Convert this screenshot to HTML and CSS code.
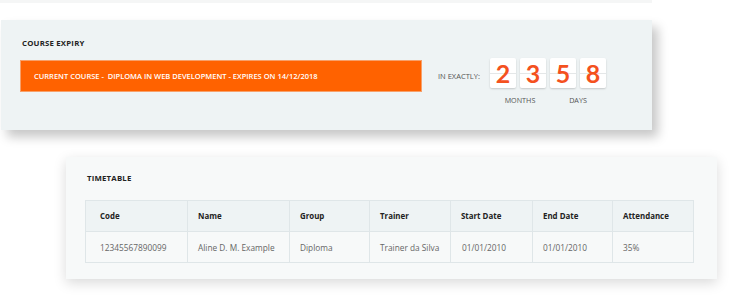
FILE: index.html
```html
<!DOCTYPE html>
<html lang="en">
<head>
  <meta charset="UTF-8" />
  <title>Student Dashboard</title>
  <link rel="stylesheet" href="styles.css">
</head>
<body>
  <div class="top-strip"></div>

  <section class="expiry">
    <h2 class="panel-title">Course Expiry</h2>
    <div class="expiry-row">
      <div class="course-bar">Current Course - &nbsp;Diploma in Web Development - Expires on 14/12/2018</div>
      <div class="countdown">
        <span class="countdown-label">In exactly:</span>
        <div class="counter">
          <div class="digits">
            <span class="digit">2</span>
            <span class="digit">3</span>
            <span class="digit">5</span>
            <span class="digit">8</span>
          </div>
          <div class="units">
            <span>Months</span>
            <span>Days</span>
          </div>
        </div>
      </div>
    </div>
  </section>

  <section class="timetable">
    <h2 class="panel-title">Timetable</h2>
    <table>
      <thead>
        <tr>
          <th class="c-code">Code</th>
          <th class="c-name">Name</th>
          <th class="c-group">Group</th>
          <th class="c-trainer">Trainer</th>
          <th class="c-start">Start Date</th>
          <th class="c-end">End Date</th>
          <th>Attendance</th>
        </tr>
      </thead>
      <tbody>
        <tr>
          <td>12345567890099</td>
          <td>Aline D. M. Example</td>
          <td>Diploma</td>
          <td>Trainer da Silva</td>
          <td class="date">01/01/2010</td>
          <td>01/01/2010</td>
          <td>35%</td>
        </tr>
      </tbody>
    </table>
  </section>
</body>
</html>
```

FILE: styles.css
```css
* { box-sizing: border-box; margin: 0; padding: 0; }

body {
  font-family: "Open Sans", Arial, sans-serif;
  background-color: #fff;
  color: #333;
  width: 730px;
  height: 300px;
  overflow: hidden;
}

.top-strip {
  width: 652px;
  height: 20px;
  border-top: 3px solid #f5f6f6;
  background: #fff;
}

.panel-title {
  font-size: 7.8px;
  font-weight: 700;
  letter-spacing: 0.2px;
  text-transform: uppercase;
  color: #222;
}

/* Course expiry */
.expiry {
  margin-left: 1px;
  width: 651px;
  height: 110px;
  background-color: #eef3f4;
  padding: 18px 0 0 21px;
  box-shadow: 6px 7px 10px rgba(0,0,0,0.22);
}

.expiry-row {
  display: flex;
  align-items: flex-start;
  margin-top: 12px;
}

.course-bar {
  width: 402px;
  height: 32px;
  margin-left: -2px;
  background-color: #ff6200;
  border: 1px solid #f7a06a;
  color: #fff;
  font-size: 7.5px;
  font-weight: 600;
  text-transform: uppercase;
  display: flex;
  align-items: center;
  padding-left: 13px;
}

.countdown {
  display: flex;
  align-items: flex-start;
  margin-left: 16px;
  margin-top: -2px;
}

.countdown-label {
  font-size: 7.5px;
  text-transform: uppercase;
  color: #555;
  margin-top: 13px;
  width: 52px;
}

.digits {
  display: flex;
  gap: 4px;
}

.digit {
  width: 26px;
  height: 30px;
  background: linear-gradient(#fff 0 50%, #e4e7e8 50% calc(50% + 1px), #fff calc(50% + 1px));
  border-radius: 2px;
  box-shadow: 0 1px 2px rgba(0,0,0,0.18);
  color: #f4511e;
  font-family: Lato, "Open Sans", sans-serif;
  font-size: 25px;
  font-weight: 700;
  display: flex;
  align-items: center;
  justify-content: center;
}

.units {
  display: flex;
  font-size: 7.2px;
  text-transform: uppercase;
  color: #555;
  margin-top: 7px;
}

.units span {
  width: 60px;
  text-align: center;
}

.units span + span { width: 56px; }

/* Timetable */
.timetable {
  margin: 27px 0 0 66px;
  width: 651px;
  height: 122px;
  background-color: #f7f9f9;
  padding: 16px 0 0 21px;
  box-shadow: 0 4px 12px rgba(0,0,0,0.15);
}

.timetable table {
  margin-left: -2px;
}

table {
  margin-top: 17px;
  width: 609px;
  border-collapse: collapse;
  font-size: 8.3px;
}

th, td {
  border: 1px solid #dfe6e8;
  text-align: left;
  height: 31px;
  padding: 0 0 0 10px;
}

th {
  background-color: #eef3f4;
  font-size: 7.9px;
  font-weight: 700;
  color: #222;
}

td {
  color: #666;
  background-color: #f7f9f9;
}

td.date { padding-left: 11px; }

th:first-child, td:first-child { padding-left: 14px; }

.c-code { width: 102px; }
.c-name { width: 102px; }
.c-group { width: 80px; }
.c-trainer { width: 81px; }
.c-start { width: 82px; }
.c-end { width: 80px; }
```
